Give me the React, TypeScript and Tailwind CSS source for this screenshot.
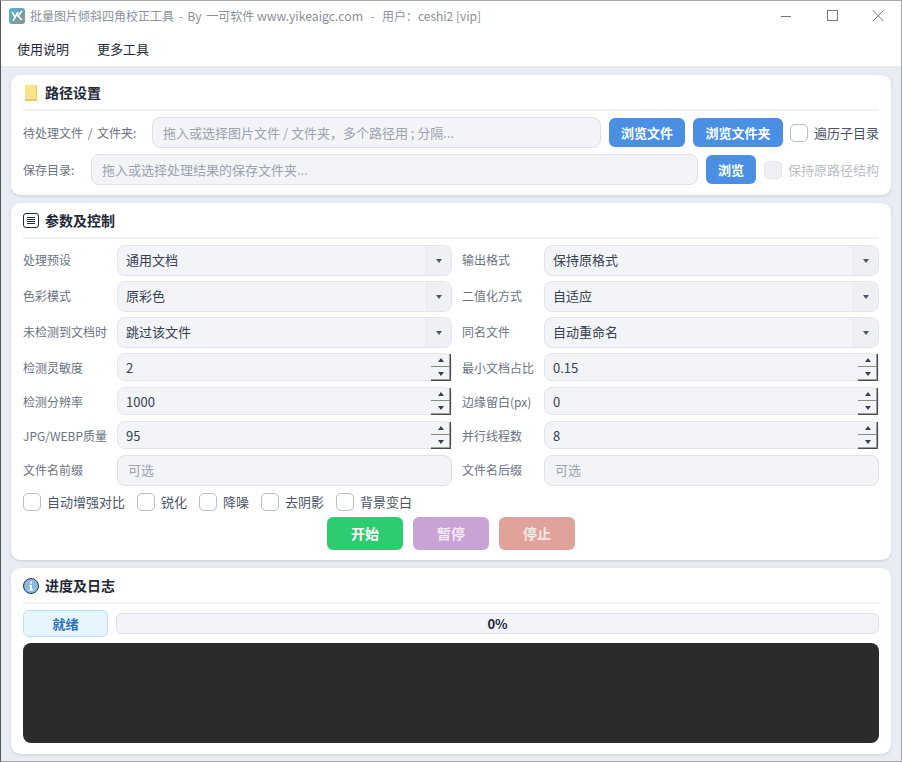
import React from 'react';

const Caret = () => (
  <svg width="6" height="4" viewBox="0 0 6 4" className="block">
    <path d="M0 0H6L3 4Z" fill="#4b5563" />
  </svg>
);

const SectionTitle = ({ icon, title }: { icon: React.ReactNode; title: string }) => (
  <div className="h-[36px] border-b-2 border-[#eef0f3] flex items-center gap-[6px] pt-[1px]">
    <div className="w-[16px] flex justify-center">{icon}</div>
    <span className="text-[14px] font-bold text-[#1f2937]">{title}</span>
  </div>
);

const TextBox = ({ placeholder, className }: { placeholder: string; className: string }) => (
  <input
    readOnly
    placeholder={placeholder}
    className={`h-[31px] rounded-lg bg-[#f3f4f8] border border-[#dde0e7] px-[10px] text-[13px] outline-none placeholder:text-[#9ca3af] ${className}`}
  />
);

const BlueButton = ({ label, className }: { label: string; className: string }) => (
  <button className={`h-[29px] rounded-md bg-[#4a8fe3] text-white text-[13px] font-bold ${className}`}>{label}</button>
);

const Label = ({ text, className }: { text: string; className: string }) => (
  <span className={`text-[12px] text-[#6b7280] shrink-0 whitespace-nowrap ${className}`}>{text}</span>
);

const SelectBox = ({ value }: { value: string }) => (
  <div className="w-[335px] h-[31px] rounded-lg bg-[#f3f4f8] border border-[#e2e5ea] flex items-center">
    <span className="flex-1 pl-[8px] pb-[2px] text-[13px] text-[#374151]">{value}</span>
    <div className="w-[25px] h-full border-l border-[#e9ebf0] bg-[#eef0f4] rounded-r-lg flex items-center justify-center">
      <Caret />
    </div>
  </div>
);

const SpinBox = ({ value }: { value: string }) => (
  <div className="w-[335px] h-[28px] rounded-lg bg-[#f3f4f8] border border-[#e2e5ea] flex items-center relative">
    <span className="flex-1 pl-[8px] pt-[2px] text-[13px] text-[#374151]">{value}</span>
    <div className="absolute right-[0px] top-[0px] w-[20px] h-[27px] border-r border-b border-[#4b4b4b] shadow-[inset_-1px_-1px_0_#a0a0a0] flex flex-col">
      <div className="h-[13px] border-b border-[#8a8a8a] flex items-center justify-center">
        <svg width="6" height="4" viewBox="0 0 6 4"><path d="M3 0L6 4H0Z" fill="#374151" /></svg>
      </div>
      <div className="flex-1 flex items-center justify-center">
        <svg width="6" height="4" viewBox="0 0 6 4"><path d="M0 0H6L3 4Z" fill="#374151" /></svg>
      </div>
    </div>
  </div>
);

const Check = ({ label, disabled }: { label: string; disabled?: boolean }) => (
  <div className="flex items-center gap-[6px]">
    <div className={`w-[18px] h-[18px] rounded-[5px] border ${disabled ? 'bg-[#eef0f4] border-[#e2e5ea]' : 'bg-white border-[#b6bdcb]'}`} />
    <span className={`text-[13px] ${disabled ? 'text-[#b9bdc5]' : 'text-[#4b5563]'}`}>{label}</span>
  </div>
);

const FormRow = ({ children, className }: { children: React.ReactNode; className: string }) => (
  <div className={`flex items-center ${className}`}>{children}</div>
);

const Row = ({ label, right, top, nudge, children }: { label: string; right: string; top?: string; nudge: string; children: React.ReactNode }) => {
  const [first, second] = React.Children.toArray(children);
  return (
    <>
      <div className={`flex items-center ${nudge} ${top ?? ''}`}><Label text={label} className="" /></div>
      <div className={top ?? ''}>{first}</div>
      <div className={`flex items-center pl-[10px] ${nudge} ${top ?? ''}`}><Label text={right} className="" /></div>
      <div className={top ?? ''}>{second}</div>
    </>
  );
};

const App: React.FC = () => {
  return (
    <div
      className="w-[902px] h-[762px] overflow-hidden flex flex-col bg-[#e9edf3] border-t border-t-[#a8a8a8] border-l border-l-[#555] border-r border-r-[#a8a8a8] border-b border-b-[#a8a8a8]"
      style={{ fontFamily: '"Noto Sans CJK SC", "Liberation Sans", sans-serif' }}
    >
      {/* Title bar */}
      <div className="h-[32px] bg-white flex items-center shrink-0 pb-[2px]">
        <svg width="16" height="16" viewBox="0 0 16 16" className="ml-[8px] mr-[5px] mb-[1px]">
          <defs>
            <linearGradient id="logo" x1="0" y1="0" x2="1" y2="1">
              <stop offset="0" stopColor="#4fb7c9" />
              <stop offset="1" stopColor="#8b8f8f" />
            </linearGradient>
          </defs>
          <rect width="16" height="16" rx="3" fill="url(#logo)" />
          <path d="M3 4L6 9M9 4L4 13M13 3L9 8L13 12" stroke="#fff" strokeWidth="1.6" fill="none" />
        </svg>
        <span className="text-[12px] text-[#8b9099] whitespace-pre">
          <span className="[word-spacing:2px]">批量图片倾斜四角校正工具 - By 一可软件</span> <span className="text-[12.25px]">www.yikeaigc.com</span><span className="[word-spacing:1px]">  -  用户：</span>ceshi2 [vip]
        </span>
        <div className="ml-auto flex items-center">
          <svg width="12" height="12" viewBox="0 0 12 12" className="mr-[34px]"><path d="M1 6.5H11" stroke="#777" /></svg>
          <svg width="12" height="12" viewBox="0 0 12 12" className="mr-[34px]"><rect x="1.5" y="0.5" width="10" height="10" fill="none" stroke="#777" /></svg>
          <svg width="12" height="12" viewBox="0 0 12 12" className="mr-[17px]"><path d="M1 0.5L11.5 11M11.5 0.5L1 11" stroke="#777" /></svg>
        </div>
      </div>

      {/* Menu bar */}
      <div className="h-[34px] bg-white border-b border-[#e3e6eb] flex items-center pl-[16px] gap-[28px] text-[13px] text-[#1f2937] shrink-0 pb-[2px]">
        <span>使用说明</span>
        <span>更多工具</span>
      </div>

      <div className="flex flex-col gap-[8px] pt-[8px] pl-[10px]">
        {/* 路径设置 */}
        <div className="w-[880px] h-[120px] bg-white rounded-[9px] px-[12px] shadow-[0_1px_3px_rgba(100,116,139,0.25)]">
          <SectionTitle
            title="路径设置"
            icon={<div className="w-[12px] h-[16px] bg-[#fbe38a] border-b-2 border-r border-[#efc65a] rounded-[1px]" />}
          />
          <FormRow className="mt-[6px] h-[31px]">
            <Label text="待处理文件 / 文件夹:" className="w-[129px] [word-spacing:2px]" />
            <TextBox placeholder="拖入或选择图片文件 / 文件夹，多个路径用 ; 分隔..." className="w-[449px]" />
            <BlueButton label="浏览文件" className="w-[76px] ml-[8px]" />
            <BlueButton label="浏览文件夹" className="w-[90px] ml-[8px]" />
            <div className="ml-[7px]"><Check label="遍历子目录" /></div>
          </FormRow>
          <FormRow className="mt-[6px] h-[31px]">
            <Label text="保存目录:" className="w-[68px]" />
            <TextBox placeholder="拖入或选择处理结果的保存文件夹..." className="w-[607px]" />
            <BlueButton label="浏览" className="w-[50px] ml-[8px]" />
            <div className="ml-[8px]"><Check label="保持原路径结构" disabled /></div>
          </FormRow>
        </div>

        {/* 参数及控制 */}
        <div className="w-[880px] h-[357px] bg-white rounded-[9px] px-[12px] shadow-[0_1px_3px_rgba(100,116,139,0.25)]">
          <SectionTitle
            title="参数及控制"
            icon={
              <div className="w-[16px] h-[15px] rounded-[3px] border-[1.5px] border-[#1f2937] flex flex-col items-center justify-center gap-[1px]">
                <div className="w-[8px] h-[1px] bg-[#1f2937]" />
                <div className="w-[8px] h-[1px] bg-[#1f2937]" />
                <div className="w-[8px] h-[1px] bg-[#1f2937]" />
                <div className="w-[8px] h-[1px] bg-[#1f2937]" />
              </div>
            }
          />
          <div className="grid grid-cols-[94px_335px_92px_335px] mt-[6px]">
            <Row label="处理预设" right="输出格式" nudge="pb-[2px]"><SelectBox value="通用文档" /><SelectBox value="保持原格式" /></Row>
            <Row label="色彩模式" right="二值化方式" top="mt-[5px]" nudge="pb-[2px]"><SelectBox value="原彩色" /><SelectBox value="自适应" /></Row>
            <Row label="未检测到文档时" right="同名文件" top="mt-[5px]" nudge="pb-[2px]"><SelectBox value="跳过该文件" /><SelectBox value="自动重命名" /></Row>
            <Row label="检测灵敏度" right="最小文档占比" top="mt-[5px]" nudge="pt-[2px]"><SpinBox value="2" /><SpinBox value="0.15" /></Row>
            <Row label="检测分辨率" right="边缘留白(px)" top="mt-[6px]" nudge="pt-[2px]"><SpinBox value="1000" /><SpinBox value="0" /></Row>
            <Row label="JPG/WEBP质量" right="并行线程数" top="mt-[6px]" nudge="pt-[2px]"><SpinBox value="95" /><SpinBox value="8" /></Row>
            <Row label="文件名前缀" right="文件名后缀" top="mt-[6px]" nudge="pb-[2px]">
              <TextBox placeholder="可选" className="w-[335px] pb-[2px]" />
              <TextBox placeholder="可选" className="w-[335px] pb-[2px]" />
            </Row>
          </div>
          <div className="flex items-center gap-[12px] mt-[7px] h-[18px]">
            <Check label="自动增强对比" />
            <Check label="锐化" />
            <Check label="降噪" />
            <Check label="去阴影" />
            <Check label="背景变白" />
          </div>
          <div className="flex justify-center gap-[10px] mt-[6px] h-[33px]">
            <button className="w-[76px] rounded-md bg-[#2ecc71] text-white text-[14px] font-bold">开始</button>
            <button className="w-[76px] rounded-md bg-[#c9a3d6] text-[#f3e9f6] text-[14px] font-bold">暂停</button>
            <button className="w-[76px] rounded-md bg-[#e0a39b] text-[#f8e8e5] text-[14px] font-bold">停止</button>
          </div>
        </div>

        {/* 进度及日志 */}
        <div className="w-[880px] h-[186px] bg-white rounded-[9px] px-[12px] shadow-[0_1px_3px_rgba(100,116,139,0.25)]">
          <SectionTitle
            title="进度及日志"
            icon={
              <div className="w-[16px] h-[16px] rounded-full bg-[#8db8e0] border-[1.5px] border-[#27384d] flex items-center justify-center">
                <svg width="6" height="10" viewBox="0 0 6 10"><path d="M2 0.5H4V2.5H2ZM1 4H4V8.5H5.5V9.5H0.5V8.5H2V5H1Z" fill="#fff" /></svg>
              </div>
            }
          />
          <div className="flex items-start mt-[6px] h-[28px]">
            <div className="w-[85px] h-[27px] rounded-md bg-[#e6f5ff] border border-[#b6e0fb] flex items-center justify-center text-[13px] font-bold text-[#2f72b8]">就绪</div>
            <div className="w-[763px] h-[21px] ml-[8px] mt-[3px] rounded-md bg-[#f3f4f8] border border-[#dde0e7] flex items-center justify-center text-[13px] font-bold text-[#1f2937]">0%</div>
          </div>
          <div className="h-[100px] mt-[5px] rounded-lg bg-[#2b2b2b]" />
        </div>
      </div>
    </div>
  );
};

export default App;
